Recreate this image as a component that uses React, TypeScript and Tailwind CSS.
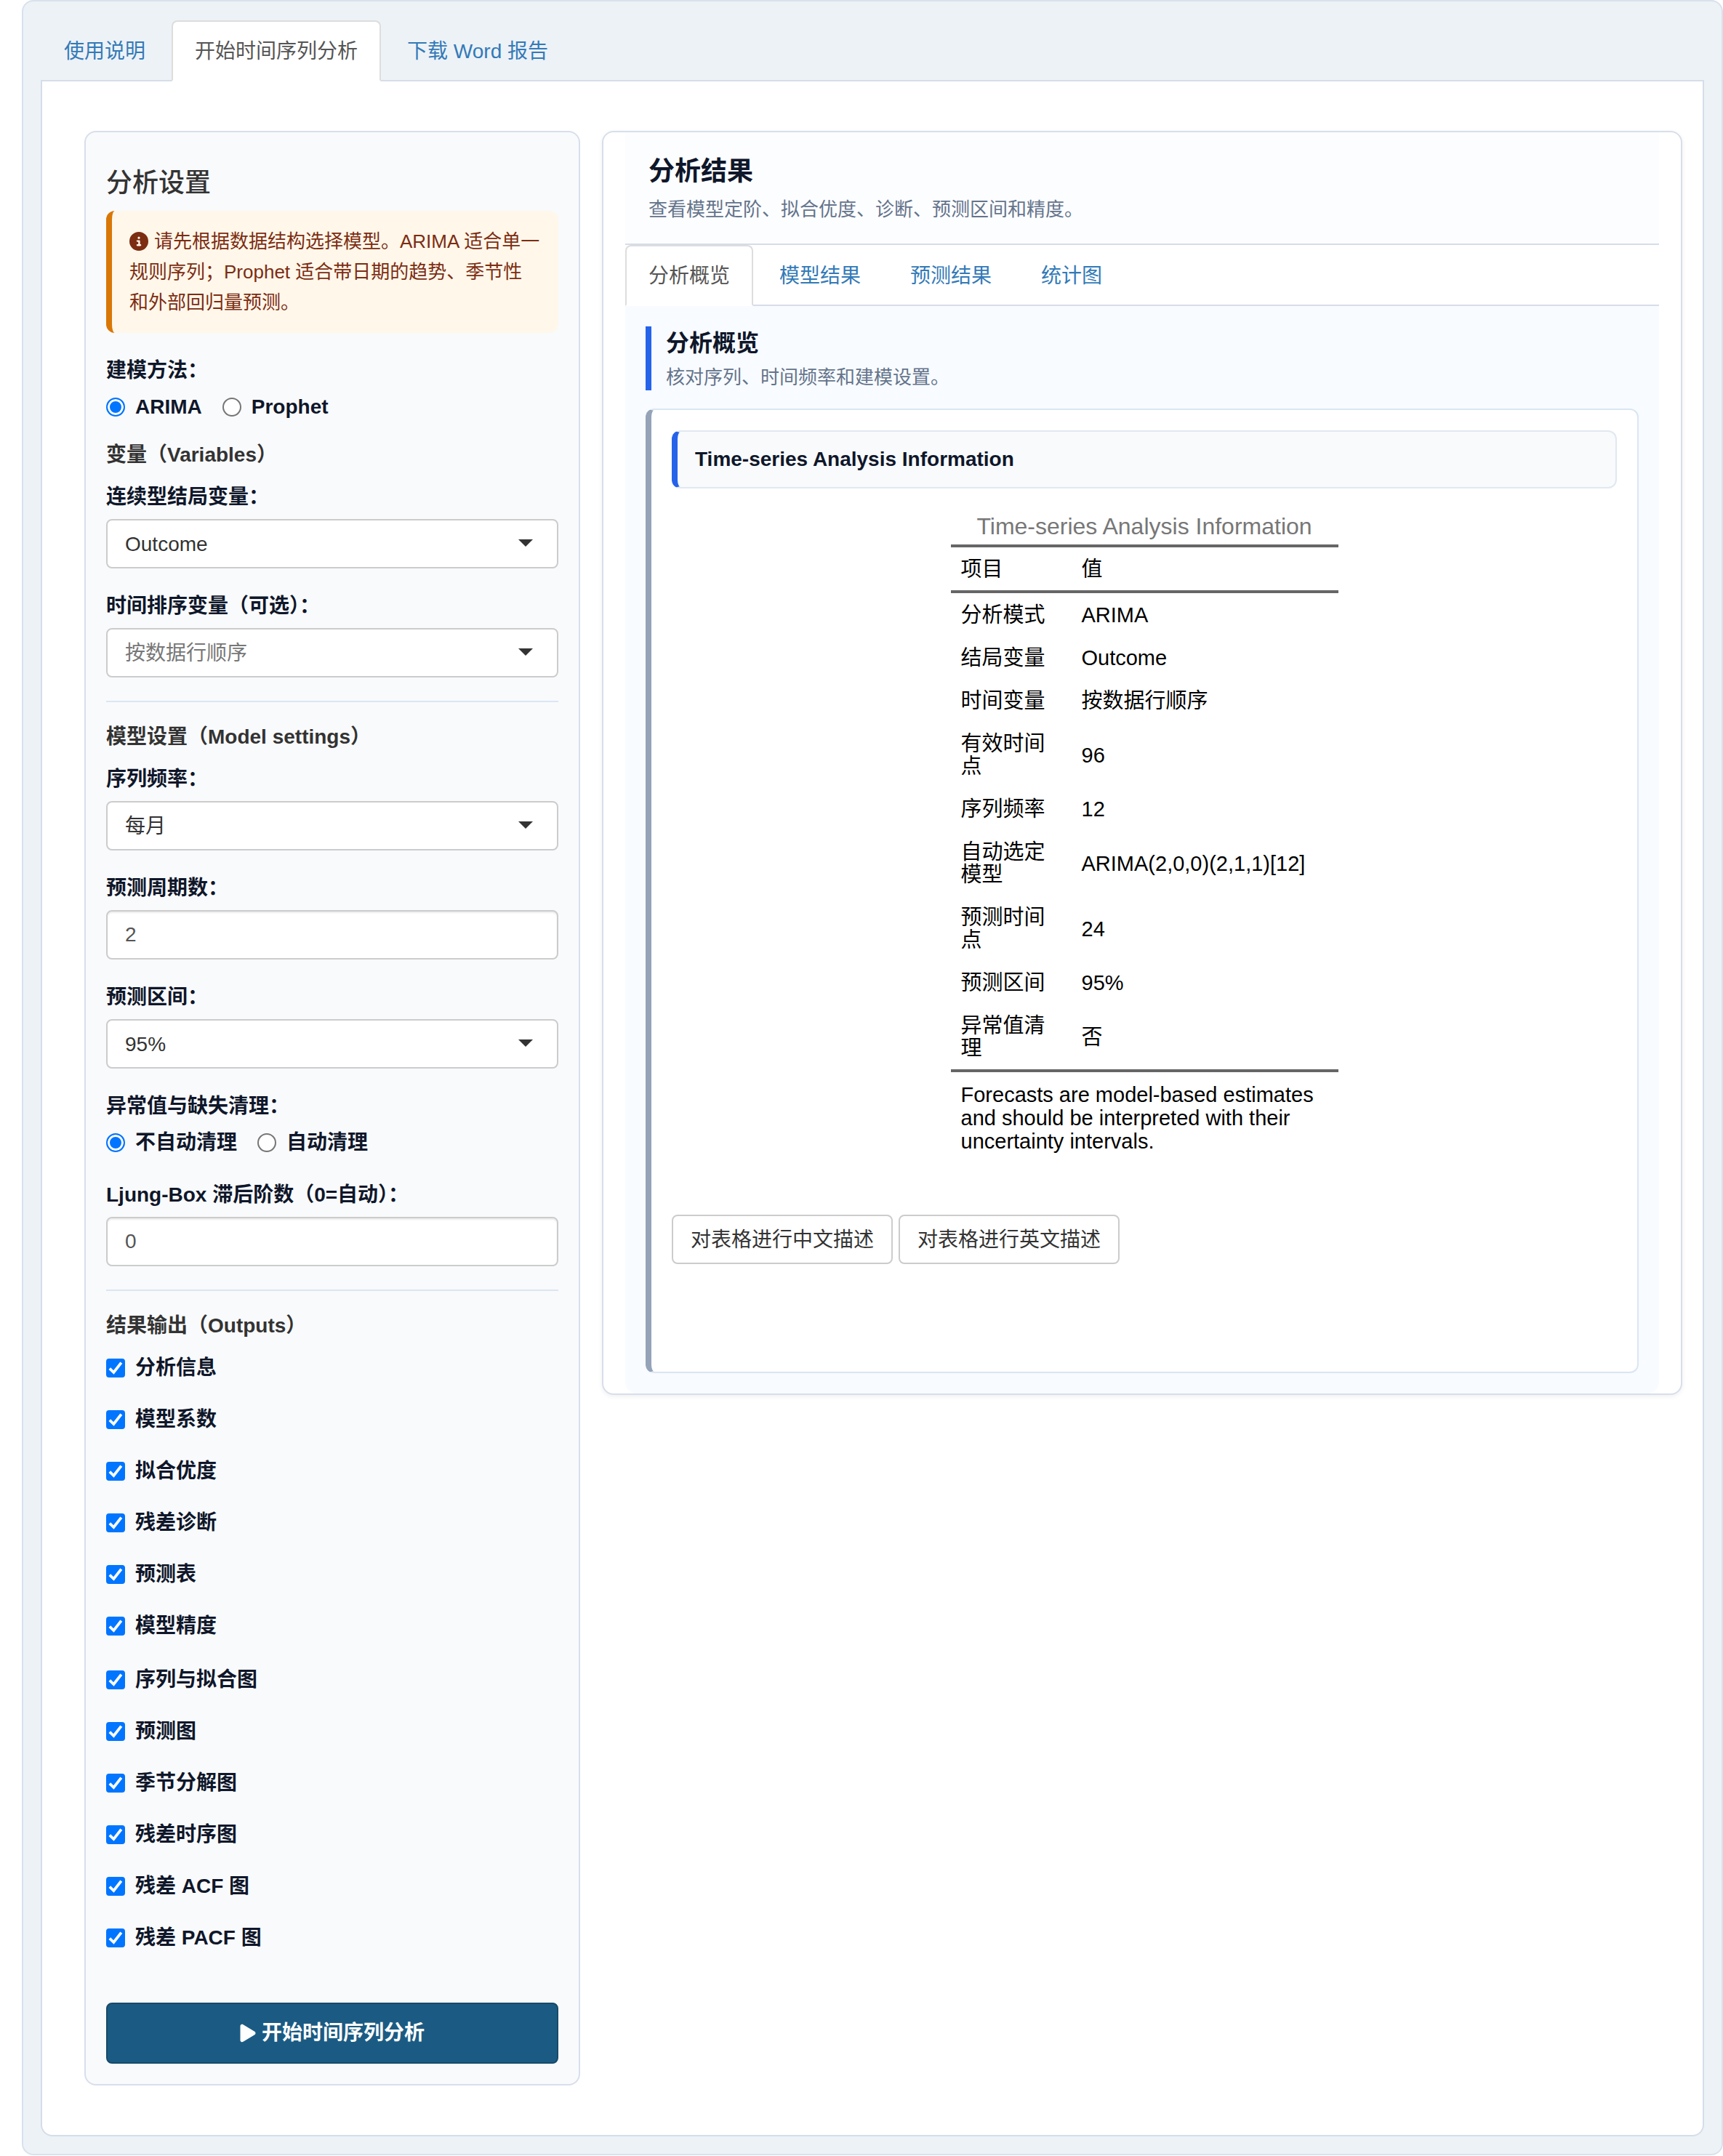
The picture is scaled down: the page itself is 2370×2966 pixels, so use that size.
import React, { useState } from "react";
import { FaCircleInfo, FaPlay } from "react-icons/fa6";

const tabBase = "-mb-[2px] mr-1 rounded-t-lg border-2 px-[30px] pt-[21px] pb-[19px] text-[28px] leading-10";

function TabBar({ tabs, active }: { tabs: string[]; active: number }) {
  return (
    <nav className="flex border-b-2 border-[#d6dde9]">
      {tabs.map((tab, i) => (
        <a
          key={tab}
          href="#"
          aria-current={i === active ? "page" : undefined}
          className={
            i === active
              ? `${tabBase} border-[#ddd] border-b-white bg-white text-[#555]`
              : `${tabBase} border-transparent text-[#337ab7]`
          }
        >
          {tab}
        </a>
      ))}
    </nav>
  );
}

function SelectField({ id, label, options, muted }: { id: string; label: string; options: string[]; muted?: boolean }) {
  return (
    <div className="mb-8">
      <label htmlFor={id} className="mb-[10px] block leading-10 font-bold text-[#0f172a]">
        {label}
      </label>
      <div className="relative">
        <select
          id={id}
          className={
            muted
              ? "block h-[68px] w-full appearance-none rounded-lg border-2 border-[#ccc] bg-white px-6 pt-[2px] text-[#777]"
              : "block h-[68px] w-full appearance-none rounded-lg border-2 border-[#ccc] bg-white px-6 pt-[2px] text-[#333]"
          }
        >
          {options.map((option) => (
            <option key={option}>{option}</option>
          ))}
        </select>
        <span className="pointer-events-none absolute top-7 right-[35px] border-x-10 border-t-10 border-x-transparent border-t-[#333]" />
      </div>
    </div>
  );
}

function TextField({ id, label, value }: { id: string; label: string; value: string }) {
  return (
    <div className="mb-8">
      <label htmlFor={id} className="mb-[10px] block leading-10 font-bold text-[#0f172a]">
        {label}
      </label>
      <input
        id={id}
        type="text"
        inputMode="numeric"
        defaultValue={value}
        className="block h-[68px] w-full rounded-lg border-2 border-[#ccc] bg-white px-6 text-[#555] shadow-[inset_0_2px_2px_rgba(0,0,0,0.075)]"
      />
    </div>
  );
}

function RadioField({ name, label, options }: { name: string; label: string; options: string[] }) {
  const [selected, setSelected] = useState(options[0]);
  return (
    <fieldset>
      <legend className="mb-[10px] leading-10 font-bold text-[#0f172a]">{label}</legend>
      <div className="flex gap-7">
        {options.map((option) => (
          <label key={option} className="flex items-center gap-[14px] leading-10 font-bold text-[#0f172a]">
            <input
              type="radio"
              name={name}
              checked={selected === option}
              onChange={() => setSelected(option)}
              className="size-[26px] appearance-none rounded-full border-2 border-[#767676] bg-white checked:border-[#0075ff] checked:bg-[#0075ff] checked:shadow-[inset_0_0_0_3px_white]"
            />
            {option}
          </label>
        ))}
      </div>
    </fieldset>
  );
}

function SectionTitle({ children }: { children: React.ReactNode }) {
  return <h5 className="leading-10 font-bold text-[#333]">{children}</h5>;
}

function Divider() {
  return <hr className="mb-7 border-t-2 border-[#dbe6f3]" />;
}

function CheckList({ items }: { items: string[] }) {
  return (
    <div className="flex flex-col gap-[31px]">
      {items.map((item) => (
        <label key={item} className="flex items-center gap-[14px] leading-10 font-bold text-[#0f172a]">
          <span className="relative block size-[26px]">
            <input
              type="checkbox"
              defaultChecked
              className="peer block size-[26px] appearance-none rounded border-2 border-[#767676] bg-white checked:border-[#0075ff] checked:bg-[#0075ff]"
            />
            <svg
              viewBox="0 0 26 26"
              className="pointer-events-none absolute inset-0 hidden size-[26px] peer-checked:block"
              fill="none"
              stroke="white"
              strokeWidth="3.8"
            >
              <path d="M4.8 13.6 10.4 19 20.8 5.6" />
            </svg>
          </span>
          {item}
        </label>
      ))}
    </div>
  );
}

const tableOutputs = ["分析信息", "模型系数", "拟合优度", "残差诊断", "预测表", "模型精度"];
const plotOutputs = ["序列与拟合图", "预测图", "季节分解图", "残差时序图", "残差 ACF 图", "残差 PACF 图"];

const infoRows = [
  ["分析模式", "ARIMA"],
  ["结局变量", "Outcome"],
  ["时间变量", "按数据行顺序"],
  ["有效时间点", "96"],
  ["序列频率", "12"],
  ["自动选定模型", "ARIMA(2,0,0)(2,1,1)[12]"],
  ["预测时间点", "24"],
  ["预测区间", "95%"],
  ["异常值清理", "否"],
];

function SettingsPanel() {
  return (
    <aside className="rounded-2xl border-2 border-[#d8deeb] bg-[#f9fafc] p-7">
      <h4 className="mt-[22px] mb-[18px] text-[36px] leading-10 font-medium text-[#333]">分析设置</h4>
      <p className="mb-8 rounded-xl border-l-8 border-[#d97706] bg-[#fff7ea] px-6 py-[21px] text-[26px] leading-[42px] text-[#7c2d12]">
        <FaCircleInfo className="mr-2 mb-1 inline size-[26px]" />
        请先根据数据结构选择模型。ARIMA 适合单一规则序列；Prophet 适合带日期的趋势、季节性和外部回归量预测。
      </p>
      <RadioField name="method" label="建模方法：" options={["ARIMA", "Prophet"]} />
      <div className="mt-[26px] mb-[18px]">
        <SectionTitle>变量（Variables）</SectionTitle>
      </div>
      <SelectField id="outcome" label="连续型结局变量：" options={["Outcome"]} />
      <SelectField id="time" label="时间排序变量（可选）：" options={["按数据行顺序"]} muted />
      <Divider />
      <div className="mb-[18px]">
        <SectionTitle>模型设置（Model settings）</SectionTitle>
      </div>
      <SelectField id="frequency" label="序列频率：" options={["每月"]} />
      <TextField id="periods" label="预测周期数：" value="2" />
      <SelectField id="interval" label="预测区间：" options={["95%"]} />
      <div className="mb-8">
        <RadioField name="clean" label="异常值与缺失清理：" options={["不自动清理", "自动清理"]} />
      </div>
      <TextField id="lag" label="Ljung-Box 滞后阶数（0=自动）：" value="0" />
      <Divider />
      <div className="mb-[18px]">
        <SectionTitle>结果输出（Outputs）</SectionTitle>
      </div>
      <div className="flex flex-col gap-[34px]">
        <CheckList items={tableOutputs} />
        <CheckList items={plotOutputs} />
      </div>
      <button
        type="button"
        className="mt-[69px] flex h-[84px] w-full items-center justify-center gap-2 rounded-lg border-2 border-[#174a69] bg-[#1b5b83] font-bold text-white"
      >
        <FaPlay className="h-7 w-[22px]" />
        开始时间序列分析
      </button>
    </aside>
  );
}

function InfoTable() {
  return (
    <table className="mx-auto mt-8 w-[533px] table-fixed border-separate border-spacing-0 text-left text-[29px] leading-[31px] text-black">
      <caption className="pb-[5px] text-[32px] leading-10 text-[#777]">Time-series Analysis Information</caption>
      <colgroup>
        <col className="w-[166px]" />
        <col />
      </colgroup>
      <thead>
        <tr>
          <th className="border-y-4 border-[#666] px-[14px] pt-[15px] pb-[13px] font-normal">项目</th>
          <th className="border-y-4 border-[#666] px-[14px] pt-[15px] pb-[13px] font-normal">值</th>
        </tr>
      </thead>
      <tbody>
        {infoRows.map(([key, value]) => (
          <tr key={key}>
            <td className="px-[14px] pt-[15px] pb-[13px] align-middle">{key}</td>
            <td className="px-[14px] pt-[15px] pb-[13px] align-middle">{value}</td>
          </tr>
        ))}
      </tbody>
      <tfoot>
        <tr>
          <td colSpan={2} className="border-t-4 border-[#666] px-[14px] pt-[15px] pb-[13px] leading-8">
            Forecasts are model-based estimates and should be interpreted with their uncertainty intervals.
          </td>
        </tr>
      </tfoot>
    </table>
  );
}

function ResultsPanel() {
  return (
    <section className="self-start rounded-2xl border-2 border-[#d8deeb] bg-white px-[30px] shadow-[0_2px_6px_rgba(15,23,42,0.07)]">
      <header className="border-b-2 border-[#d6dde9] bg-[#fcfdff] px-8 pt-[34px] pb-[29px]">
        <h3 className="text-[36px] leading-10 font-bold text-[#0f172a]">分析结果</h3>
        <p className="mt-[14px] text-[26px] leading-9 text-[#64748b]">查看模型定阶、拟合优度、诊断、预测区间和精度。</p>
      </header>
      <TabBar tabs={["分析概览", "模型结果", "预测结果", "统计图"]} active={0} />
      <div className="rounded-b-2xl bg-[#f8fbff] p-7">
        <div className="mb-[25px] border-l-8 border-[#2563eb] pt-1 pl-5">
          <h4 className="text-[32px] leading-[38px] font-bold text-[#0f172a]">分析概览</h4>
          <p className="mt-[10px] text-[26px] leading-9 text-[#64748b]">核对序列、时间频率和建模设置。</p>
        </div>
        <div className="rounded-xl border-2 border-l-8 border-[#dbe6f3] border-l-[#94a3b8] bg-white px-7 pt-7 pb-[148px]">
          <h5 className="rounded-xl border-2 border-l-8 border-[#e2e8f0] border-l-[#2563eb] bg-[#f8fafc] px-6 py-[18px] leading-10 font-bold text-[#0f172a]">
            Time-series Analysis Information
          </h5>
          <InfoTable />
          <div className="mt-[72px] flex gap-2">
            {["对表格进行中文描述", "对表格进行英文描述"].map((text) => (
              <button
                key={text}
                type="button"
                className="h-[68px] rounded-lg border-2 border-[#ccc] bg-white px-6 pt-[2px] text-[#333]"
              >
                {text}
              </button>
            ))}
          </div>
        </div>
      </div>
    </section>
  );
}

export default function App() {
  return (
    <div
      lang="zh-CN"
      className="bg-white pl-[30px] font-['Liberation_Sans','Noto_Sans_CJK_SC',sans-serif] text-[28px] leading-10 text-[#333]"
    >
      <div className="rounded-2xl border-2 border-[#d8e1ec] bg-[#edf2f7] px-6 pt-[26px] pb-6">
        <TabBar tabs={["使用说明", "开始时间序列分析", "下载 Word 报告"]} active={1} />
        <main className="grid grid-cols-[682fr_1486fr] gap-[30px] rounded-b-2xl border-2 border-t-0 border-[#d6dde9] bg-white pt-[68px] pr-7 pb-[68px] pl-[58px]">
          <SettingsPanel />
          <ResultsPanel />
        </main>
      </div>
    </div>
  );
}
